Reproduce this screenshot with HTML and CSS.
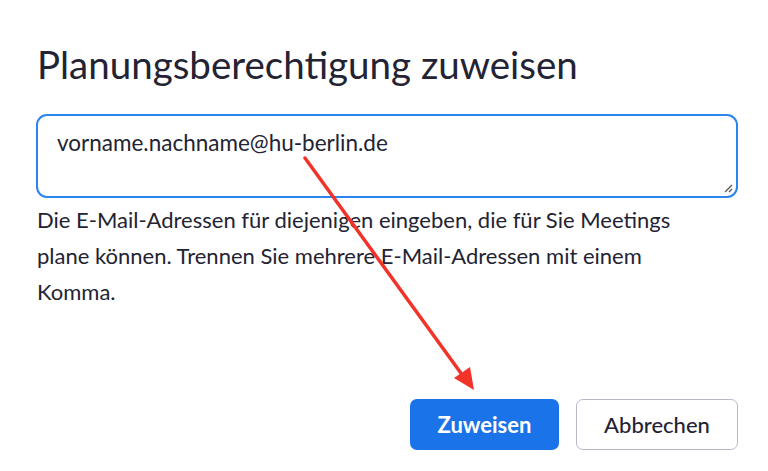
FILE: index.html
```html
<!DOCTYPE html>
<html lang="de">
<head>
<meta charset="utf-8">
<link rel="stylesheet" href="styles.css">
</head>
<body>
<div class="dialog">
  <h1 class="title">Planungsberechtigung zuweisen</h1>
  <div class="field">
    <div class="textarea">vorname.nachname@hu-berlin.de
      <svg class="grip" width="10" height="10" viewBox="0 0 10 10"><path d="M9 2 L2 9 M9 6 L6 9" stroke="#555" stroke-width="1.3" fill="none"/></svg>
    </div>
  </div>
  <p class="help">Die E-Mail-Adressen für diejenigen eingeben, die für Sie Meetings plane können. Trennen Sie mehrere E-Mail-Adressen mit einem Komma.</p>
  <div class="actions">
    <button class="btn primary">Zuweisen</button>
    <button class="btn secondary">Abbrechen</button>
  </div>
</div>
<svg class="arrow" width="768" height="471" viewBox="0 0 768 471">
  <line x1="305" y1="158" x2="463" y2="376" stroke="#f2332a" stroke-width="3.5" stroke-linecap="round"/>
  <polygon points="474,390 454,378 470,367" fill="#f2332a"/>
</svg>
</body>
</html>
```
FILE: styles.css
```css
html, body {
  margin: 0;
  padding: 0;
  background: #ffffff;
}
body {
  font-family: Lato, "Open Sans", sans-serif;
  color: #232333;
  width: 768px;
  height: 471px;
  overflow: hidden;
  position: relative;
}
.dialog {
  padding: 37px 30px 0 36px;
}
.title {
  margin: 0 0 23px 1px;
  font-size: 38.5px;
  font-weight: 400;
  line-height: 54px;
  letter-spacing: 0;
}
.textarea {
  position: relative;
  box-sizing: border-box;
  width: 702px;
  height: 84px;
  border: 2px solid #2d84f0;
  border-radius: 11px;
  padding: 12px 19px;
  font-size: 22.5px;
  line-height: 30px;
}
.grip {
  position: absolute;
  right: 3px;
  bottom: 3px;
}
.help {
  margin: 4px 0 0 1px;
  width: 680px;
  font-size: 22px;
  line-height: 36px;
}
.actions {
  display: flex;
  justify-content: flex-end;
  gap: 17px;
  margin-top: 89px;
  width: 702px;
}
.btn {
  font-family: Lato, "Open Sans", sans-serif;
  font-size: 22px;
  height: 51px;
  border-radius: 7px;
  box-sizing: border-box;
  cursor: pointer;
}
.primary {
  width: 149px;
  background: #1a73e8;
  color: #ffffff;
  border: none;
  font-weight: 700;
}
.secondary {
  width: 162px;
  background: #ffffff;
  color: #232333;
  border: 1.5px solid #b8b8cc;
  font-weight: 500;
}
.arrow {
  position: absolute;
  left: 0;
  top: 0;
  pointer-events: none;
}
```
